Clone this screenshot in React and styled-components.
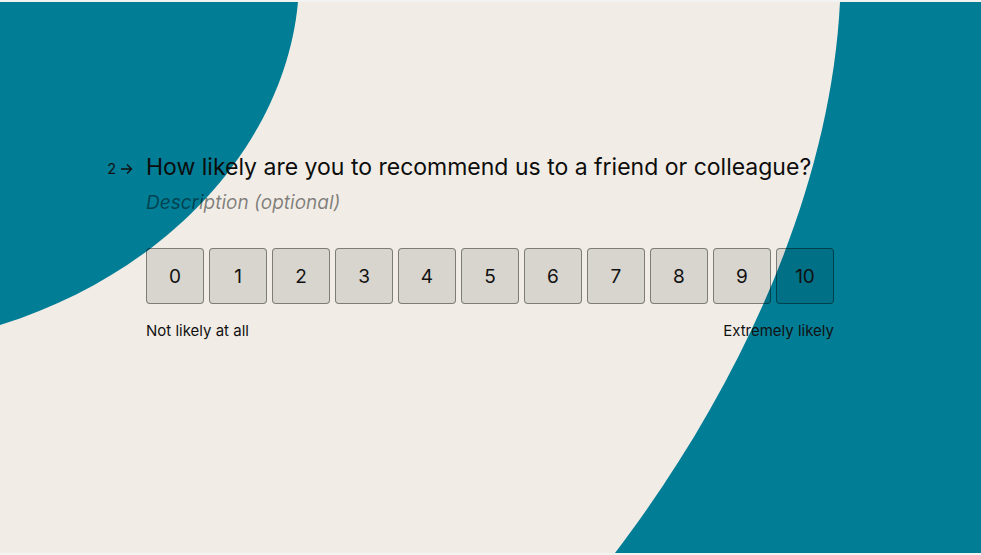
import React from "react"
import styled, { createGlobalStyle } from "styled-components"

const GlobalStyle = createGlobalStyle`
  html, body {
    margin: 0;
    padding: 0;
  }
  body {
    font-family: Inter, "Liberation Sans", sans-serif;
    background: #f1ede6;
  }
`

const Page = styled.div`
  position: relative;
  width: 981px;
  height: 555px;
  overflow: hidden;
  background: #f1ede6;
  border-top: 2px solid #f3f3f1;
  border-bottom: 2px solid #f3f3f1;
  box-sizing: border-box;
`

const Backdrop = styled.svg`
  position: absolute;
  top: 0;
  left: 0;
  width: 981px;
  height: 551px;
`

const Form = styled.div`
  position: relative;
  display: flex;
  flex-direction: column;
  width: 688px;
  padding: 150px 0 0 146px;
`

const QuestionRow = styled.div`
  position: relative;
  display: flex;
  align-items: center;
`

const Counter = styled.div`
  position: absolute;
  right: 100%;
  margin-right: 13px;
  display: flex;
  align-items: center;
  gap: 4px;
  font-size: 14.5px;
  color: #111;
  top: 8px;
`

const Question = styled.h1`
  margin: 0;
  font-size: 23px;
  font-weight: 400;
  line-height: 30px;
  color: #0d0d0d;
  white-space: nowrap;
`

const Description = styled.p`
  margin: 9px 0 0;
  font-size: 19px;
  font-style: italic;
  line-height: 24px;
  color: rgba(0, 0, 0, 0.48);
`

const Scale = styled.div`
  display: grid;
  grid-template-columns: repeat(11, 58px);
  gap: 5px;
  margin-top: 33px;
`

const ScoreButton = styled.button`
  height: 56px;
  padding: 0;
  border: 1px solid rgba(0, 0, 0, 0.42);
  border-radius: 4px;
  background: rgba(0, 0, 0, 0.1);
  font-family: Inter, "Liberation Sans", sans-serif;
  font-size: 19px;
  color: #111;
`

const Labels = styled.div`
  display: flex;
  justify-content: space-between;
  margin-top: 18px;
  font-size: 15px;
  line-height: 18px;
  color: #111;
`

const scores = [0, 1, 2, 3, 4, 5, 6, 7, 8, 9, 10]

export default function App() {
  return (
    <>
      <GlobalStyle />
      <Page>
        <Backdrop viewBox="0 0 981 551">
          <path d="M0 0 L298 0 C285 140 170 270 0 323 Z" fill="#017d96" />
          <path d="M840 0 C830 200 730 400 615 551 L981 551 L981 0 Z" fill="#017d96" />
        </Backdrop>
        <Form>
          <QuestionRow>
            <Counter>
              <span>2</span>
              <svg width="13" height="12" viewBox="0 0 13 12">
                <path d="M1 6 H11.5 M7 1.5 L11.5 6 L7 10.5" fill="none" stroke="#111" strokeWidth="1.4" />
              </svg>
            </Counter>
            <Question>How likely are you to recommend us to a friend or colleague?</Question>
          </QuestionRow>
          <Description>Description (optional)</Description>
          <Scale>
            {scores.map(s => (
              <ScoreButton key={s}>{s}</ScoreButton>
            ))}
          </Scale>
          <Labels>
            <span>Not likely at all</span>
            <span>Extremely likely</span>
          </Labels>
        </Form>
      </Page>
    </>
  )
}
